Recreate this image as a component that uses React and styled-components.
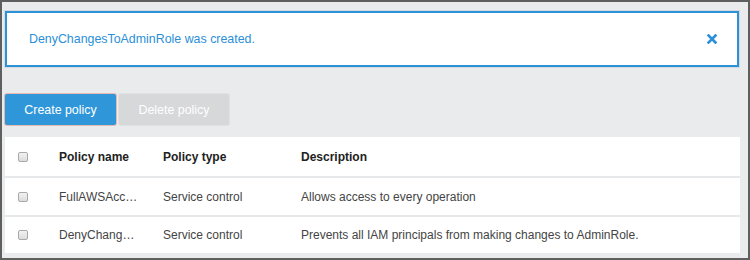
import React from "react";
import styled, { createGlobalStyle } from "styled-components";

const Global = createGlobalStyle`
  html, body { margin: 0; padding: 0; background: #fff; }
  body { font-family: "Liberation Sans", Arial, sans-serif; }
`;

const Frame = styled.div`
  box-sizing: border-box;
  width: 750px;
  height: 260px;
  border: 2px solid #5f5f5f;
  background: #e9ebed;
  padding: 8px 8px 0 2px;
  display: flex;
  flex-direction: column;
`;

const Alert = styled.div`
  box-sizing: border-box;
  height: 56px;
  background: #fff;
  border: 2px solid #2b91d9;
  box-shadow: 0 0 0 1px #d6dadd;
  margin: 1px;
  display: flex;
  align-items: center;
  justify-content: space-between;
  padding: 0 20px 0 22px;
  color: #2b8fd8;
  font-size: 12.4px;
`;

const CloseX = styled.svg`
  width: 10px;
  height: 10px;
  display: block;
`;

const Toolbar = styled.div`
  display: flex;
  gap: 3px;
  margin-top: 26px;
`;

const Button = styled.button`
  box-sizing: border-box;
  height: 31px;
  width: ${(p) => p.$w}px;
  border: none;
  border-radius: 2px;
  font-family: "Liberation Sans", Arial, sans-serif;
  font-size: 12.4px;
  color: #fff;
  background: ${(p) => (p.$disabled ? "#d6d8da" : "#2f97d9")};
  box-shadow: 0 0 0 1px ${(p) => (p.$disabled ? "#dfe1e3" : "#e8b9b0")};
  padding: 0;
  margin-left: ${(p) => (p.$first ? "1px" : "0")};
`;

const Table = styled.div`
  margin-top: 12px;
  margin-left: 1px;
  background: #fff;
  display: flex;
  flex-direction: column;
`;

const Row = styled.div`
  display: grid;
  grid-template-columns: 54px 104px 138px 1fr;
  align-items: center;
  height: ${(p) => p.$h}px;
  border-top: ${(p) => (p.$first ? "none" : "2px solid #e6e8ea")};
  font-size: 12px;
  color: ${(p) => (p.$head ? "#222" : "#444")};
  font-weight: ${(p) => (p.$head ? 700 : 400)};
`;

const Cell = styled.div`
  white-space: nowrap;
`;

const CheckCell = styled.div`
  padding-left: 13px;
  display: flex;
  align-items: center;
`;

const Check = styled.span`
  box-sizing: border-box;
  width: 10px;
  height: 10px;
  border: 1px solid #a9a9a9;
  border-radius: 2px;
  background: linear-gradient(#f2f2f2, #dcdcdc);
  display: block;
`;

const rows = [
  ["FullAWSAcc\u2026", "Service control", "Allows access to every operation"],
  ["DenyChang\u2026", "Service control", "Prevents all IAM principals from making changes to AdminRole."],
];

export default function App() {
  return (
    <>
      <Global />
      <Frame>
        <Alert>
          <span>DenyChangesToAdminRole was created.</span>
          <CloseX viewBox="0 0 10 10">
            <path d="M1.5 1.5 L8.5 8.5 M8.5 1.5 L1.5 8.5" stroke="#2b8fd8" strokeWidth="2.6" strokeLinecap="square" />
          </CloseX>
        </Alert>
        <Toolbar>
          <Button $w={111} $first>Create policy</Button>
          <Button $w={110} $disabled>Delete policy</Button>
        </Toolbar>
        <Table>
          <Row $head $first $h={39}>
            <CheckCell><Check /></CheckCell>
            <Cell>Policy name</Cell>
            <Cell>Policy type</Cell>
            <Cell>Description</Cell>
          </Row>
          {rows.map((r, i) => (
            <Row key={i} $h={i === 0 ? 37 : 36}>
              <CheckCell><Check /></CheckCell>
              <Cell>{r[0]}</Cell>
              <Cell>{r[1]}</Cell>
              <Cell>{r[2]}</Cell>
            </Row>
          ))}
        </Table>
      </Frame>
    </>
  );
}
